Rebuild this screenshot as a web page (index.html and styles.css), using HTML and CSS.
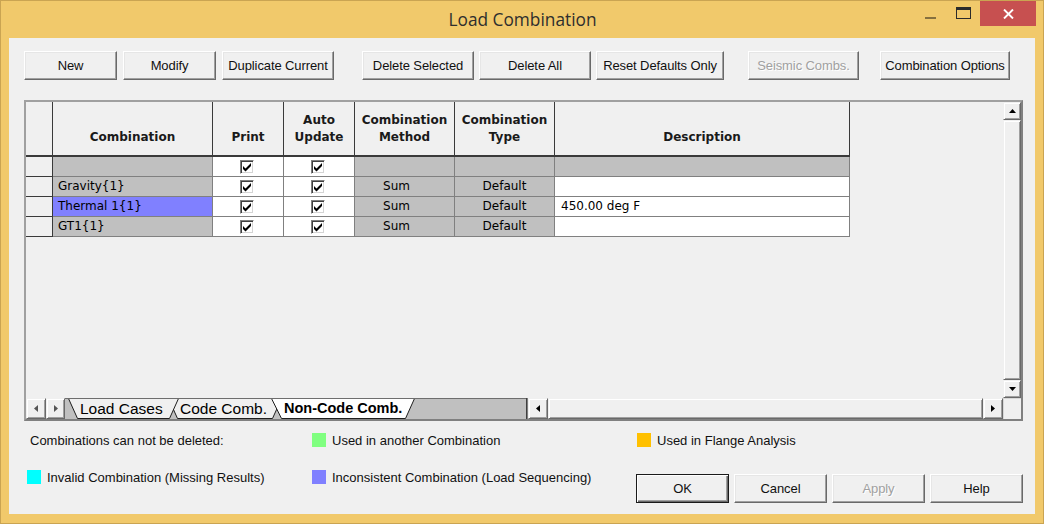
FILE: index.html
```html
<!DOCTYPE html>
<html>
<head>
<meta charset="utf-8">
<title>Load Combination</title>
<link rel="stylesheet" href="styles.css">
</head>
<body>
<div class="window">
  <header class="titlebar">
    <div></div>
    <div class="title">Load Combination</div>
    <div class="wctrls">
      <span class="wbtn wmin"><span class="minbar"></span></span>
      <span class="wbtn wmax"><span class="maxbox"></span></span>
      <span class="wbtn wclose"><svg width="11" height="10" viewBox="0 0 11 10"><path d="M1 0.5L10 9.5M10 0.5L1 9.5" stroke="#fff" stroke-width="1.9" fill="none"/></svg></span>
    </div>
  </header>

  <main class="client">
    <div class="toolbar">
      <div class="btn w93">New</div>
      <div class="btn w93 ml6">Modify</div>
      <div class="btn w112 ml6">Duplicate Current</div>
      <div class="btn w112 ml28">Delete Selected</div>
      <div class="btn w112 ml5">Delete All</div>
      <div class="btn w128 ml5">Reset Defaults Only</div>
      <div class="btn w111 ml24 disabled">Seismic Combs.</div>
      <div class="btn w130 ml21">Combination Options</div>
    </div>

    <div class="gridbox">
      <div class="upper">
        <div class="sheet">
          <div class="table">
            <div class="hd rh"></div>
            <div class="hd">Combination</div>
            <div class="hd">Print</div>
            <div class="hd">Auto<br>Update</div>
            <div class="hd">Combination<br>Method</div>
            <div class="hd">Combination<br>Type</div>
            <div class="hd">Description</div>

            <div class="rh"></div>
            <div class="c g"></div>
            <div class="c w ctr"><span class="cb"><svg width="10" height="10" viewBox="0 0 10 10"><polygon points="1,4 3.5,6.5 9,1 9,4 3.5,9.5 1,7" fill="#000"/></svg></span></div>
            <div class="c w ctr"><span class="cb"><svg width="10" height="10" viewBox="0 0 10 10"><polygon points="1,4 3.5,6.5 9,1 9,4 3.5,9.5 1,7" fill="#000"/></svg></span></div>
            <div class="c g"></div>
            <div class="c g"></div>
            <div class="c g"></div>

            <div class="rh"></div>
            <div class="c g">Gravity{1}</div>
            <div class="c w ctr"><span class="cb"><svg width="10" height="10" viewBox="0 0 10 10"><polygon points="1,4 3.5,6.5 9,1 9,4 3.5,9.5 1,7" fill="#000"/></svg></span></div>
            <div class="c w ctr"><span class="cb"><svg width="10" height="10" viewBox="0 0 10 10"><polygon points="1,4 3.5,6.5 9,1 9,4 3.5,9.5 1,7" fill="#000"/></svg></span></div>
            <div class="c g ctr sum">Sum</div>
            <div class="c g ctr">Default</div>
            <div class="c w desc"></div>

            <div class="rh"></div>
            <div class="c b">Thermal 1{1}</div>
            <div class="c w ctr"><span class="cb"><svg width="10" height="10" viewBox="0 0 10 10"><polygon points="1,4 3.5,6.5 9,1 9,4 3.5,9.5 1,7" fill="#000"/></svg></span></div>
            <div class="c w ctr"><span class="cb"><svg width="10" height="10" viewBox="0 0 10 10"><polygon points="1,4 3.5,6.5 9,1 9,4 3.5,9.5 1,7" fill="#000"/></svg></span></div>
            <div class="c g ctr sum">Sum</div>
            <div class="c g ctr">Default</div>
            <div class="c w desc">450.00 deg F</div>

            <div class="rh"></div>
            <div class="c g">GT1{1}</div>
            <div class="c w ctr"><span class="cb"><svg width="10" height="10" viewBox="0 0 10 10"><polygon points="1,4 3.5,6.5 9,1 9,4 3.5,9.5 1,7" fill="#000"/></svg></span></div>
            <div class="c w ctr"><span class="cb"><svg width="10" height="10" viewBox="0 0 10 10"><polygon points="1,4 3.5,6.5 9,1 9,4 3.5,9.5 1,7" fill="#000"/></svg></span></div>
            <div class="c g ctr sum">Sum</div>
            <div class="c g ctr">Default</div>
            <div class="c w desc"></div>
          </div>
        </div>
        <div class="vscroll">
          <div class="sbtn vbtn"><svg width="7" height="4" viewBox="0 0 7 4"><polygon points="0,4 7,4 3.5,0" fill="#000"/></svg></div>
          <div class="thumb vthumb"></div>
          <div class="sbtn vbtn"><svg width="7" height="4" viewBox="0 0 7 4"><polygon points="0,0 7,0 3.5,4" fill="#000"/></svg></div>
        </div>
      </div>

      <div class="bottombar">
        <div class="sbtn tabnav w20"><svg width="4" height="7" viewBox="0 0 4 7"><polygon points="4,0 4,7 0,3.5" fill="#555"/></svg></div>
        <div class="sbtn tabnav w19"><svg width="4" height="7" viewBox="0 0 4 7"><polygon points="0,0 0,7 4,3.5" fill="#555"/></svg></div>
        <div class="tabs">
          <svg class="tabart" width="461" height="21" viewBox="0 0 461 21">
            <rect width="461" height="21" fill="#c0c0c0"/>
            <polygon points="103.5,0.5 216.5,0.5 207.5,20.5 112.5,20.5" fill="#f0f0f0" stroke="#1e1e1e"/>
            <polygon points="3.5,0.5 113.5,0.5 104.5,20.5 12.5,20.5" fill="#f0f0f0" stroke="#1e1e1e"/>
            <polygon points="206.5,0.5 349.5,0.5 340.5,20.5 216.5,20.5" fill="#ffffff" stroke="#1e1e1e"/>
            <line x1="0" y1="0.5" x2="461" y2="0.5" stroke="#6e6e6e"/>
          </svg>
          <span class="tab tab1">Load Cases</span>
          <span class="tab tab2">Code Comb.</span>
          <span class="tab tab3 active">Non-Code Comb.</span>
        </div>
        <div class="tabsep"></div>
        <div class="hscroll">
          <div class="sbtn hbtn"><svg width="4" height="7" viewBox="0 0 4 7"><polygon points="4,0 4,7 0,3.5" fill="#000"/></svg></div>
          <div class="thumb hthumb"></div>
          <div class="sbtn hbtn"><svg width="4" height="7" viewBox="0 0 4 7"><polygon points="0,0 0,7 4,3.5" fill="#000"/></svg></div>
        </div>
        <div class="corner"></div>
      </div>
    </div>

    <div class="footer">
      <div class="legend note">Combinations can not be deleted:</div>
      <div class="legend"><span class="sw green"></span>Used in another Combination</div>
      <div class="legend flange"><span class="sw orange"></span>Used in Flange Analysis</div>

      <div class="legend"><span class="sw cyan"></span>Invalid Combination (Missing Results)</div>
      <div class="legend"><span class="sw blue"></span>Inconsistent Combination (Load Sequencing)</div>
      <div class="actions">
        <div class="btn w93 default">OK</div>
        <div class="btn w93">Cancel</div>
        <div class="btn w93 disabled">Apply</div>
        <div class="btn w93">Help</div>
      </div>
    </div>
  </main>
</div>
</body>
</html>
```

FILE: styles.css
```css
* { box-sizing: border-box; }

html, body {
  margin: 0;
  padding: 0;
  width: 1044px;
  height: 524px;
  overflow: hidden;
  background: #f1c96b;
}

.window {
  width: 1044px;
  height: 524px;
  border: 1px solid #caa452;
  background: #f1c96b;
  display: flex;
  flex-direction: column;
}

/* ---------- title bar ---------- */
.titlebar {
  height: 37px;
  padding: 0 7px 0 8px;
  display: grid;
  grid-template-columns: 1fr auto 1fr;
}

.title {
  padding-top: 8px;
  line-height: 22px;
  font-family: "Open Sans", "Noto Sans", sans-serif;
  font-size: 17.3px;
  color: #2e2e2e;
  text-align: center;
}

.wctrls {
  justify-self: end;
  display: flex;
  align-items: flex-start;
}

.wbtn {
  height: 25px;
  display: flex;
  justify-content: center;
}

.wmin { width: 34px; padding-top: 16px; }
.minbar { width: 11px; height: 2px; background: #86703f; }

.wmax { width: 33px; padding-top: 6px; }
.maxbox {
  width: 15px;
  height: 12px;
  border: 1px solid #2b2b2b;
  border-top-width: 3px;
}

.wclose {
  width: 56px;
  background: #c75050;
  align-items: center;
}
.wclose svg { display: block; }

/* ---------- client ---------- */
.client {
  margin: 0 8px;
  width: 1026px;
  height: 476px;
  background: #f0f0f0;
  font-family: "Liberation Sans", Arial, sans-serif;
  font-size: 13px;
  color: #000;
}

.toolbar {
  display: flex;
  padding: 13px 0 0 15px;
}

.btn {
  height: 29px;
  display: flex;
  align-items: center;
  justify-content: center;
  background: #f0f0f0;
  border: 1px solid;
  border-color: #ffffff #696969 #696969 #ffffff;
  box-shadow: inset -1px -1px 0 #a0a0a0, inset 1px 1px 0 #e6e6e6;
  font-size: 13px;
  color: #111;
  white-space: nowrap;
  letter-spacing: -0.1px;
  padding-bottom: 1px;
}
.btn.disabled { color: #a0a0a0; text-shadow: 1px 1px 0 #ffffff; }
.btn.default {
  border: 1px solid #1a1a1a;
  box-shadow: inset 1px 1px 0 #ffffff, inset -1px -1px 0 #696969, inset -2px -2px 0 #a0a0a0;
}

.w93 { width: 93px; }
.w111 { width: 111px; }
.w112 { width: 112px; }
.w128 { width: 128px; }
.w130 { width: 130px; }
.ml5 { margin-left: 5px; }
.ml6 { margin-left: 6px; }
.ml21 { margin-left: 21px; }
.ml24 { margin-left: 24px; }
.ml28 { margin-left: 28px; }

/* ---------- grid box ---------- */
.gridbox {
  margin: 20px 0 0 15px;
  width: 999px;
  height: 321px;
  border: 2px solid;
  border-color: #a0a0a0 #808080 #808080 #a0a0a0;
  display: flex;
  flex-direction: column;
  background: #f0f0f0;
}

.upper {
  height: 296px;
  display: flex;
}

.sheet {
  flex: 1;
  background: #f0f0f0;
}

.table {
  display: grid;
  grid-template-columns: 27px 160px 71px 71px 100px 100px 295px;
  grid-template-rows: 55px repeat(4, 20px);
  font-family: "DejaVu Sans", Verdana, sans-serif;
  font-size: 12px;
  color: #000;
}

.hd {
  background: #f0f0f0;
  border-right: 1px solid #3a3a3a;
  border-bottom: 2px solid #3a3a3a;
  display: flex;
  align-items: flex-end;
  justify-content: center;
  text-align: center;
  font-weight: bold;
  line-height: 17px;
  padding-bottom: 9px;
  color: #1a1a1a;
}

.rh {
  background: #f0f0f0;
  border-right: 1px solid #3a3a3a;
  border-bottom: 1px solid #3a3a3a;
}
.hd.rh { border-bottom-width: 2px; }

.c {
  border-right: 1px solid #808080;
  border-bottom: 1px solid #808080;
  display: flex;
  align-items: center;
  padding-left: 5px;
  line-height: 19px;
  white-space: nowrap;
}
.c.ctr { justify-content: center; padding-left: 0; }
.c.sum { padding-right: 16px; }
.c.desc { padding-left: 6px; }
.g { background: #c0c0c0; }
.w { background: #ffffff; }
.b { background: #8080ff; }

.cb {
  width: 14px;
  height: 14px;
  background: #fff;
  border: 1px solid;
  border-color: #808080 #ffffff #ffffff #808080;
  box-shadow: inset 1px 1px 0 #404040, inset -1px -1px 0 #d4d4d4;
  display: flex;
  align-items: center;
  justify-content: center;
  margin-right: 3px;
}
.cb svg { display: block; margin-left: 1px; margin-top: 1px; }

/* ---------- scrollbars ---------- */
.sbtn, .thumb {
  background: #f0f0f0;
  border: 1px solid;
  border-color: #f0f0f0 #696969 #696969 #f0f0f0;
  box-shadow: inset 1px 1px 0 #ffffff, inset -1px -1px 0 #a0a0a0;
  display: flex;
  align-items: center;
  justify-content: center;
}
.sbtn svg { display: block; }

.vscroll {
  width: 18px;
  display: flex;
  flex-direction: column;
}
.vbtn { height: 18px; }
.vthumb { flex: 1; }

.bottombar {
  height: 21px;
  display: flex;
}

.tabnav { height: 21px; }
.w20 { width: 20px; }
.w19 { width: 19px; }

.tabs {
  position: relative;
  width: 461px;
  height: 21px;
  display: flex;
  align-items: center;
}
.tabart { position: absolute; left: 0; top: 0; }

.tab {
  position: relative;
  font-family: "Liberation Sans", Arial, sans-serif;
  font-size: 15.5px;
  color: #000;
  white-space: nowrap;
  line-height: 21px;
}
.tab1 { margin-left: 15px; width: 100px; }
.tab2 { width: 104px; }
.tab3.active { font-weight: bold; font-size: 14.5px; }

.tabsep {
  width: 2px;
  border-left: 1px solid #404040;
  background: #808080;
}

.hscroll {
  flex: 1;
  display: flex;
}
.hbtn { width: 20px; }
.hthumb { flex: 1; }

.corner {
  width: 18px;
  background: #f0f0f0;
  border-top: 1px solid #d8d8d8;
  border-left: 1px solid #d8d8d8;
}

/* ---------- footer ---------- */
.footer {
  margin-top: 11px;
  padding-left: 18px;
  display: grid;
  grid-template-columns: 285px 324px auto;
  row-gap: 21px;
  align-items: start;
}

.legend {
  height: 16px;
  display: flex;
  align-items: center;
  gap: 6px;
  white-space: nowrap;
  color: #111;
}
.legend.note { padding-left: 3px; }
.legend.flange { margin-left: 1px; }

.sw {
  width: 14px;
  height: 14px;
  flex: none;
}
.green { background: #80ff80; }
.orange { background: #ffc000; }
.cyan { background: #00ffff; }
.blue { background: #8080ff; }

.actions {
  display: flex;
  gap: 5px;
  margin-top: 5px;
}
```
